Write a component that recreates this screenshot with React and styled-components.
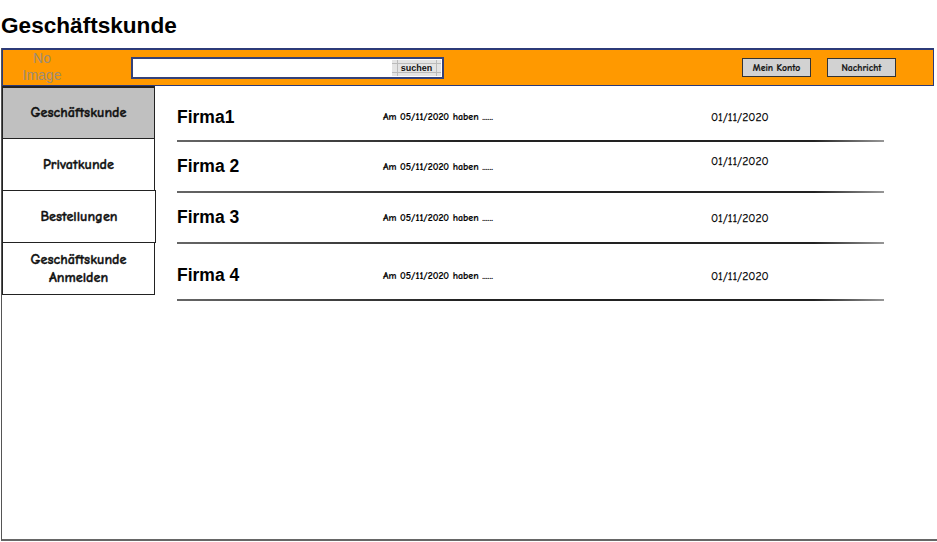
import React from "react";
import styled, { createGlobalStyle } from "styled-components";

const Global = createGlobalStyle`
  html, body {
    margin: 0;
    padding: 0;
    background: #fff;
    overflow: hidden;
    font-family: "Liberation Sans", Arial, sans-serif;
  }
`;

const sketch = `"Comic Sans MS", "Comic Neue", "DejaVu Sans", sans-serif`;

const Page = styled.div`
  width: 937px;
  height: 542px;
  overflow: hidden;
`;

const Title = styled.h1`
  margin: 0;
  height: 48px;
  box-sizing: border-box;
  padding: 13px 0 0 1px;
  font-size: 22.6px;
  line-height: 26px;
  font-weight: bold;
  color: #000;
`;

const Frame = styled.div`
  margin-left: 1px;
  width: 945px;
  height: 493px;
  box-sizing: border-box;
  border-left: 1px solid #555;
  border-bottom: 2px solid #666;
  display: flex;
  flex-direction: column;
`;

const Header = styled.header`
  width: 932px;
  height: 38px;
  box-sizing: border-box;
  background: #ff9900;
  border: 1px solid #2c3a78;
  border-top-width: 2px;
  display: flex;
  align-items: center;
`;

const Logo = styled.div`
  width: 78px;
  text-align: center;
  color: #9c8c74;
  font-size: 14px;
  line-height: 17px;
  margin-top: -1px;
`;

const Search = styled.div`
  margin-left: 50px;
  width: 313px;
  height: 22px;
  box-sizing: border-box;
  border: 2px solid #34427a;
  background: #fff;
  display: flex;
  justify-content: flex-end;
  align-items: center;
  padding-right: 1px;
`;

const SearchButton = styled.div`
  width: 49px;
  height: 16px;
  box-sizing: border-box;
  background:
    linear-gradient(#bbb, #bbb) 0 3px / 100% 1px no-repeat,
    linear-gradient(#bbb, #bbb) 0 12px / 100% 1px no-repeat,
    linear-gradient(#bbb, #bbb) 5px 0 / 1px 100% no-repeat,
    linear-gradient(#bbb, #bbb) 44px 0 / 1px 100% no-repeat,
    #e4e4e4;
  font-size: 9px;
  font-weight: bold;
  color: #111;
  display: flex;
  align-items: center;
  justify-content: center;
`;

const Actions = styled.div`
  margin-left: auto;
  margin-right: 37px;
  display: flex;
  gap: 16px;
`;

const ActionButton = styled.div`
  width: 69px;
  height: 19px;
  box-sizing: border-box;
  border: 1.5px solid #333;
  background: #d2d2d2;
  font-family: ${sketch};
  font-size: 9.7px;
  font-weight: bold;
  -webkit-text-stroke: 0.2px #111;
  color: #111;
  display: flex;
  align-items: center;
  justify-content: center;
`;

const Main = styled.div`
  display: flex;
  align-items: flex-start;
`;

const Nav = styled.nav`
  width: 153px;
  display: flex;
  flex-direction: column;
`;

const NavItem = styled.div`
  height: ${(p) => p.$h}px;
  width: ${(p) => p.$w || 153}px;
  box-sizing: border-box;
  border: 1px solid #222;
  border-top-width: ${(p) => (p.$first ? 2 : 1)}px;
  margin-top: ${(p) => (p.$first ? 0 : -1)}px;
  background: ${(p) => (p.$active ? "#c0c0c0" : "#fff")};
  font-family: ${sketch};
  font-weight: bold;
  -webkit-text-stroke: 0.35px #111;
  font-size: 14.2px;
  line-height: 18px;
  color: #111;
  display: flex;
  align-items: center;
  justify-content: center;
  text-align: center;
`;

const List = styled.div`
  margin-left: 22px;
  width: 707px;
  display: flex;
  flex-direction: column;
`;

const Row = styled.div`
  height: ${(p) => p.$h}px;
  box-sizing: border-box;
  padding-top: ${(p) => p.$pt || 0}px;
  border-bottom: 2px solid transparent;
  border-image: linear-gradient(90deg, #666, #222 40%, #222 90%, #999) 1;
  display: grid;
  grid-template-columns: 206px 328px 1fr;
  align-items: center;
`;

const Company = styled.div`
  font-size: 17.5px;
  font-weight: bold;
  color: #000;
`;

const Desc = styled.div`
  font-family: ${sketch};
  font-size: 10px;
  font-weight: bold;
  -webkit-text-stroke: 0.15px #000;
  color: #000;
`;

const DateText = styled.div`
  font-family: ${sketch};
  font-size: 11.7px;
  -webkit-text-stroke: 0.25px #000;
  color: #000;
  margin-bottom: ${(p) => p.$up || 0}px;
`;

const navItems = [
  { label: "Geschäftskunde", active: true, h: 53, first: true },
  { label: "Privatkunde", h: 53 },
  { label: "Bestellungen", h: 53, w: 154 },
  { label: ["Geschäftskunde", "Anmelden"], h: 53 },
];

const rows = [
  { name: "Firma1", h: 56, pt: 8 },
  { name: "Firma 2", h: 51, up: 12 },
  { name: "Firma 3", h: 51 },
  { name: "Firma 4", h: 57, pt: 8 },
];

export default function App() {
  return (
    <Page>
      <Global />
      <Title>Geschäftskunde</Title>
      <Frame>
        <Header>
          <Logo>
            No
            <br />
            Image
          </Logo>
          <Search>
            <SearchButton>suchen</SearchButton>
          </Search>
          <Actions>
            <ActionButton>Mein Konto</ActionButton>
            <ActionButton>Nachricht</ActionButton>
          </Actions>
        </Header>
        <Main>
          <Nav>
            {navItems.map((n, i) => (
              <NavItem key={i} $active={n.active} $h={n.h} $w={n.w} $first={n.first}>
                {Array.isArray(n.label) ? (
                  <span>
                    {n.label[0]}
                    <br />
                    {n.label[1]}
                  </span>
                ) : (
                  n.label
                )}
              </NavItem>
            ))}
          </Nav>
          <List>
            {rows.map((r) => (
              <Row key={r.name} $h={r.h} $pt={r.pt}>
                <Company>{r.name}</Company>
                <Desc>Am 05/11/2020 haben ......</Desc>
                <DateText $up={r.up}>01/11/2020</DateText>
              </Row>
            ))}
          </List>
        </Main>
      </Frame>
    </Page>
  );
}
